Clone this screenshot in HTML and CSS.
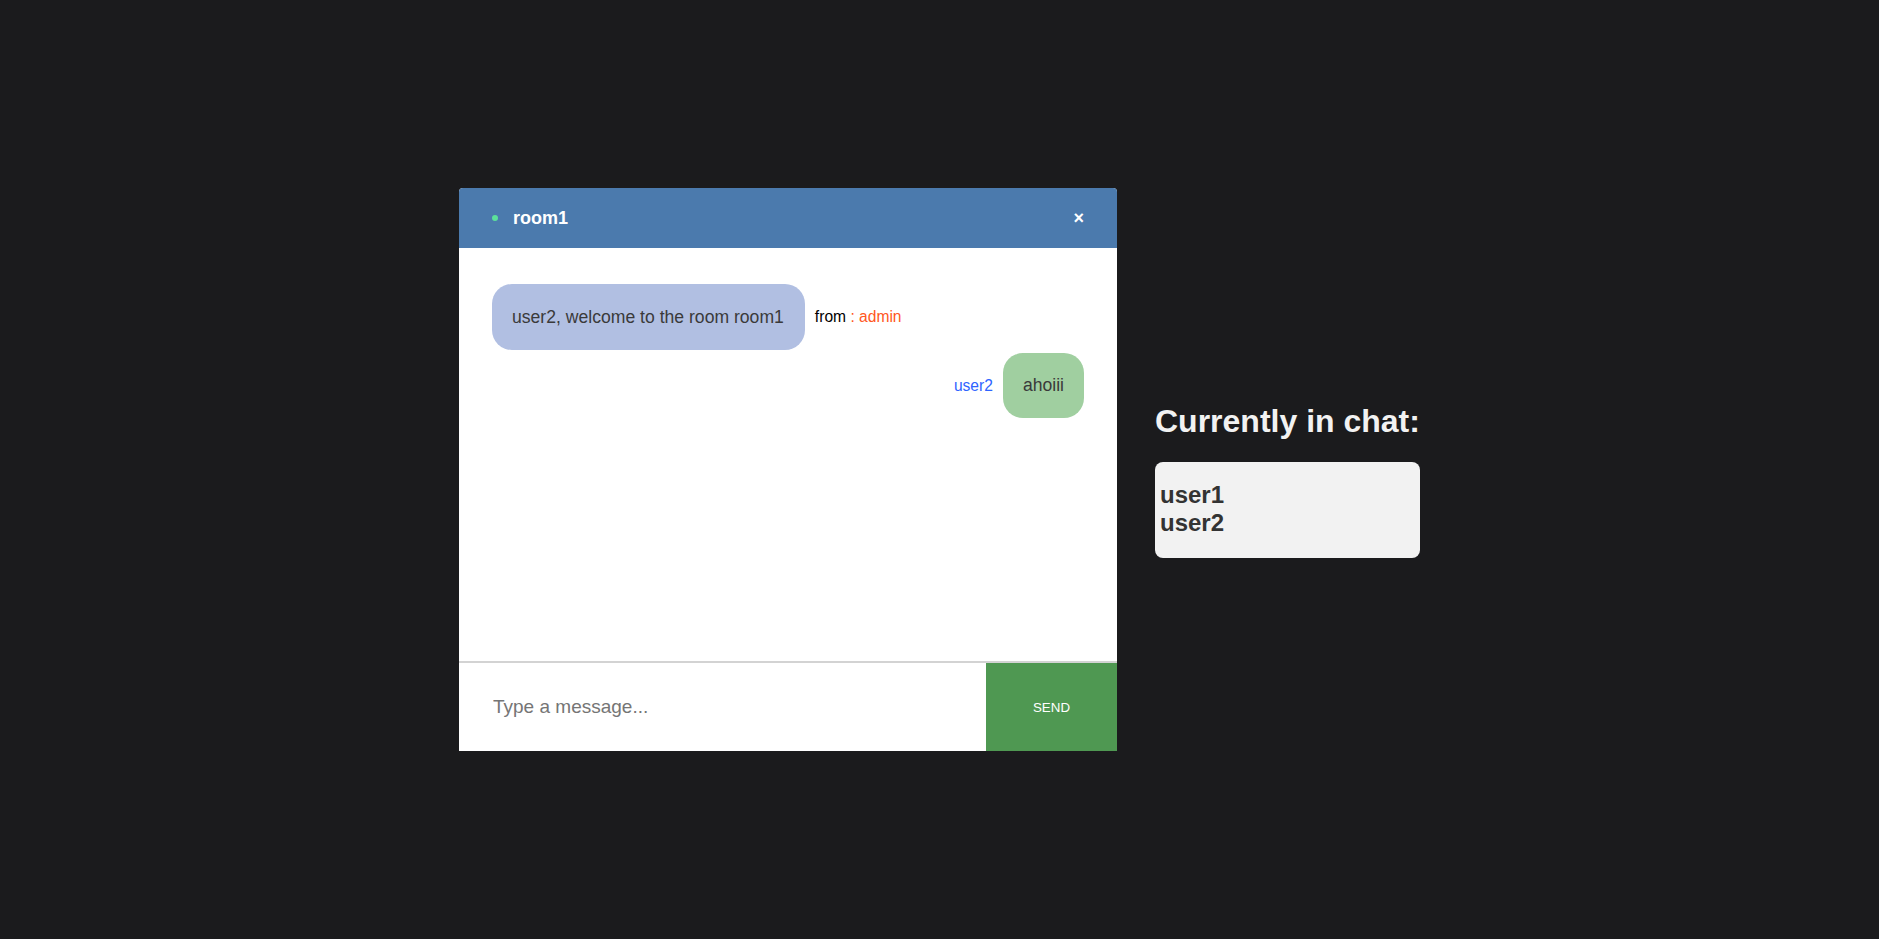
FILE: index.html
```html
<!DOCTYPE html>
<html>
<head>
<meta charset="utf-8">
<title>Chat</title>
<link rel="stylesheet" href="styles.css">
</head>
<body>
<div class="page">
  <div class="chat">
    <div class="chat-header">
      <span class="status-dot"></span>
      <span class="room-name">room1</span>
      <span class="close">×</span>
    </div>
    <div class="messages">
      <div class="msg-row incoming">
        <div class="bubble bubble-in">user2, welcome to the room room1</div>
        <div class="meta">from <span class="admin">: admin</span></div>
      </div>
      <div class="msg-row outgoing">
        <div class="sender">user2</div>
        <div class="bubble bubble-out">ahoiii</div>
      </div>
    </div>
    <div class="composer">
      <input class="msg-input" type="text" placeholder="Type a message...">
      <button class="send-btn">SEND</button>
    </div>
  </div>
  <div class="aside">
    <h2 class="aside-title">Currently in chat:</h2>
    <div class="users">
      <div class="user">user1</div>
      <div class="user">user2</div>
    </div>
  </div>
</div>
</body>
</html>
```

FILE: styles.css
```css
html, body {
  margin: 0;
  padding: 0;
  height: 100%;
}
body {
  background: #1b1b1d;
  font-family: "Liberation Sans", Arial, sans-serif;
}
.page {
  height: 100vh;
  display: flex;
  justify-content: center;
  align-items: center;
  gap: 38px;
}
.chat {
  width: 658px;
  height: 563px;
  background: #ffffff;
  border-radius: 4px 4px 0 0;
  overflow: hidden;
  display: flex;
  flex-direction: column;
}
.chat-header {
  height: 60px;
  flex: none;
  background: #4b7aad;
  display: flex;
  align-items: center;
  padding: 0 33px;
  color: #ffffff;
}
.status-dot {
  width: 6px;
  height: 6px;
  border-radius: 50%;
  background: #5ce19a;
  margin-right: 15px;
}
.room-name {
  font-size: 18px;
  font-weight: bold;
  flex: 1;
}
.close {
  font-size: 18px;
  font-weight: bold;
  line-height: 1;
}
.messages {
  flex: 1;
  padding: 36px 33px 0 33px;
  border-bottom: 2px solid #d3d3d3;
}
.msg-row {
  display: flex;
  align-items: center;
  gap: 10px;
}
.msg-row.outgoing {
  justify-content: flex-end;
  margin-top: 3px;
}
.bubble {
  font-size: 17.6px;
  line-height: 20px;
  padding: 23px 20px;
  border-radius: 20px;
  color: #3a3a3a;
}
.bubble-in {
  background: #b1bfe2;
  padding-right: 21px;
}
.bubble-out {
  background: #a0cfa0;
  padding: 22px 20px 23px;
}
.meta {
  font-size: 15.6px;
  color: #000000;
}
.admin {
  color: #ff5722;
}
.sender {
  font-size: 15.6px;
  color: #2f64ff;
}
.composer {
  height: 88px;
  flex: none;
  display: flex;
}
.msg-input {
  flex: 1;
  border: none;
  outline: none;
  padding: 0 0 0 34px;
  font-family: "Liberation Sans", Arial, sans-serif;
  font-size: 19px;
  color: #333333;
  background: #ffffff;
}
.msg-input::placeholder {
  color: #757575;
}
.send-btn {
  width: 131px;
  border: none;
  background: #4f9852;
  color: #ffffff;
  font-family: "Liberation Sans", Arial, sans-serif;
  font-size: 13.333px;
  padding: 0;
}
.aside {
  width: 265px;
  margin-top: 19px;
}
.aside-title {
  margin: 0 0 22px;
  padding-top: 2px;
  font-size: 32px;
  font-weight: bold;
  color: #f2f2f2;
  white-space: nowrap;
  line-height: normal;
}
.users {
  background: #f2f2f2;
  border-radius: 8px;
  padding: 19px 5px 21px;
}
.user {
  font-size: 24px;
  font-weight: bold;
  color: #333333;
}
```
